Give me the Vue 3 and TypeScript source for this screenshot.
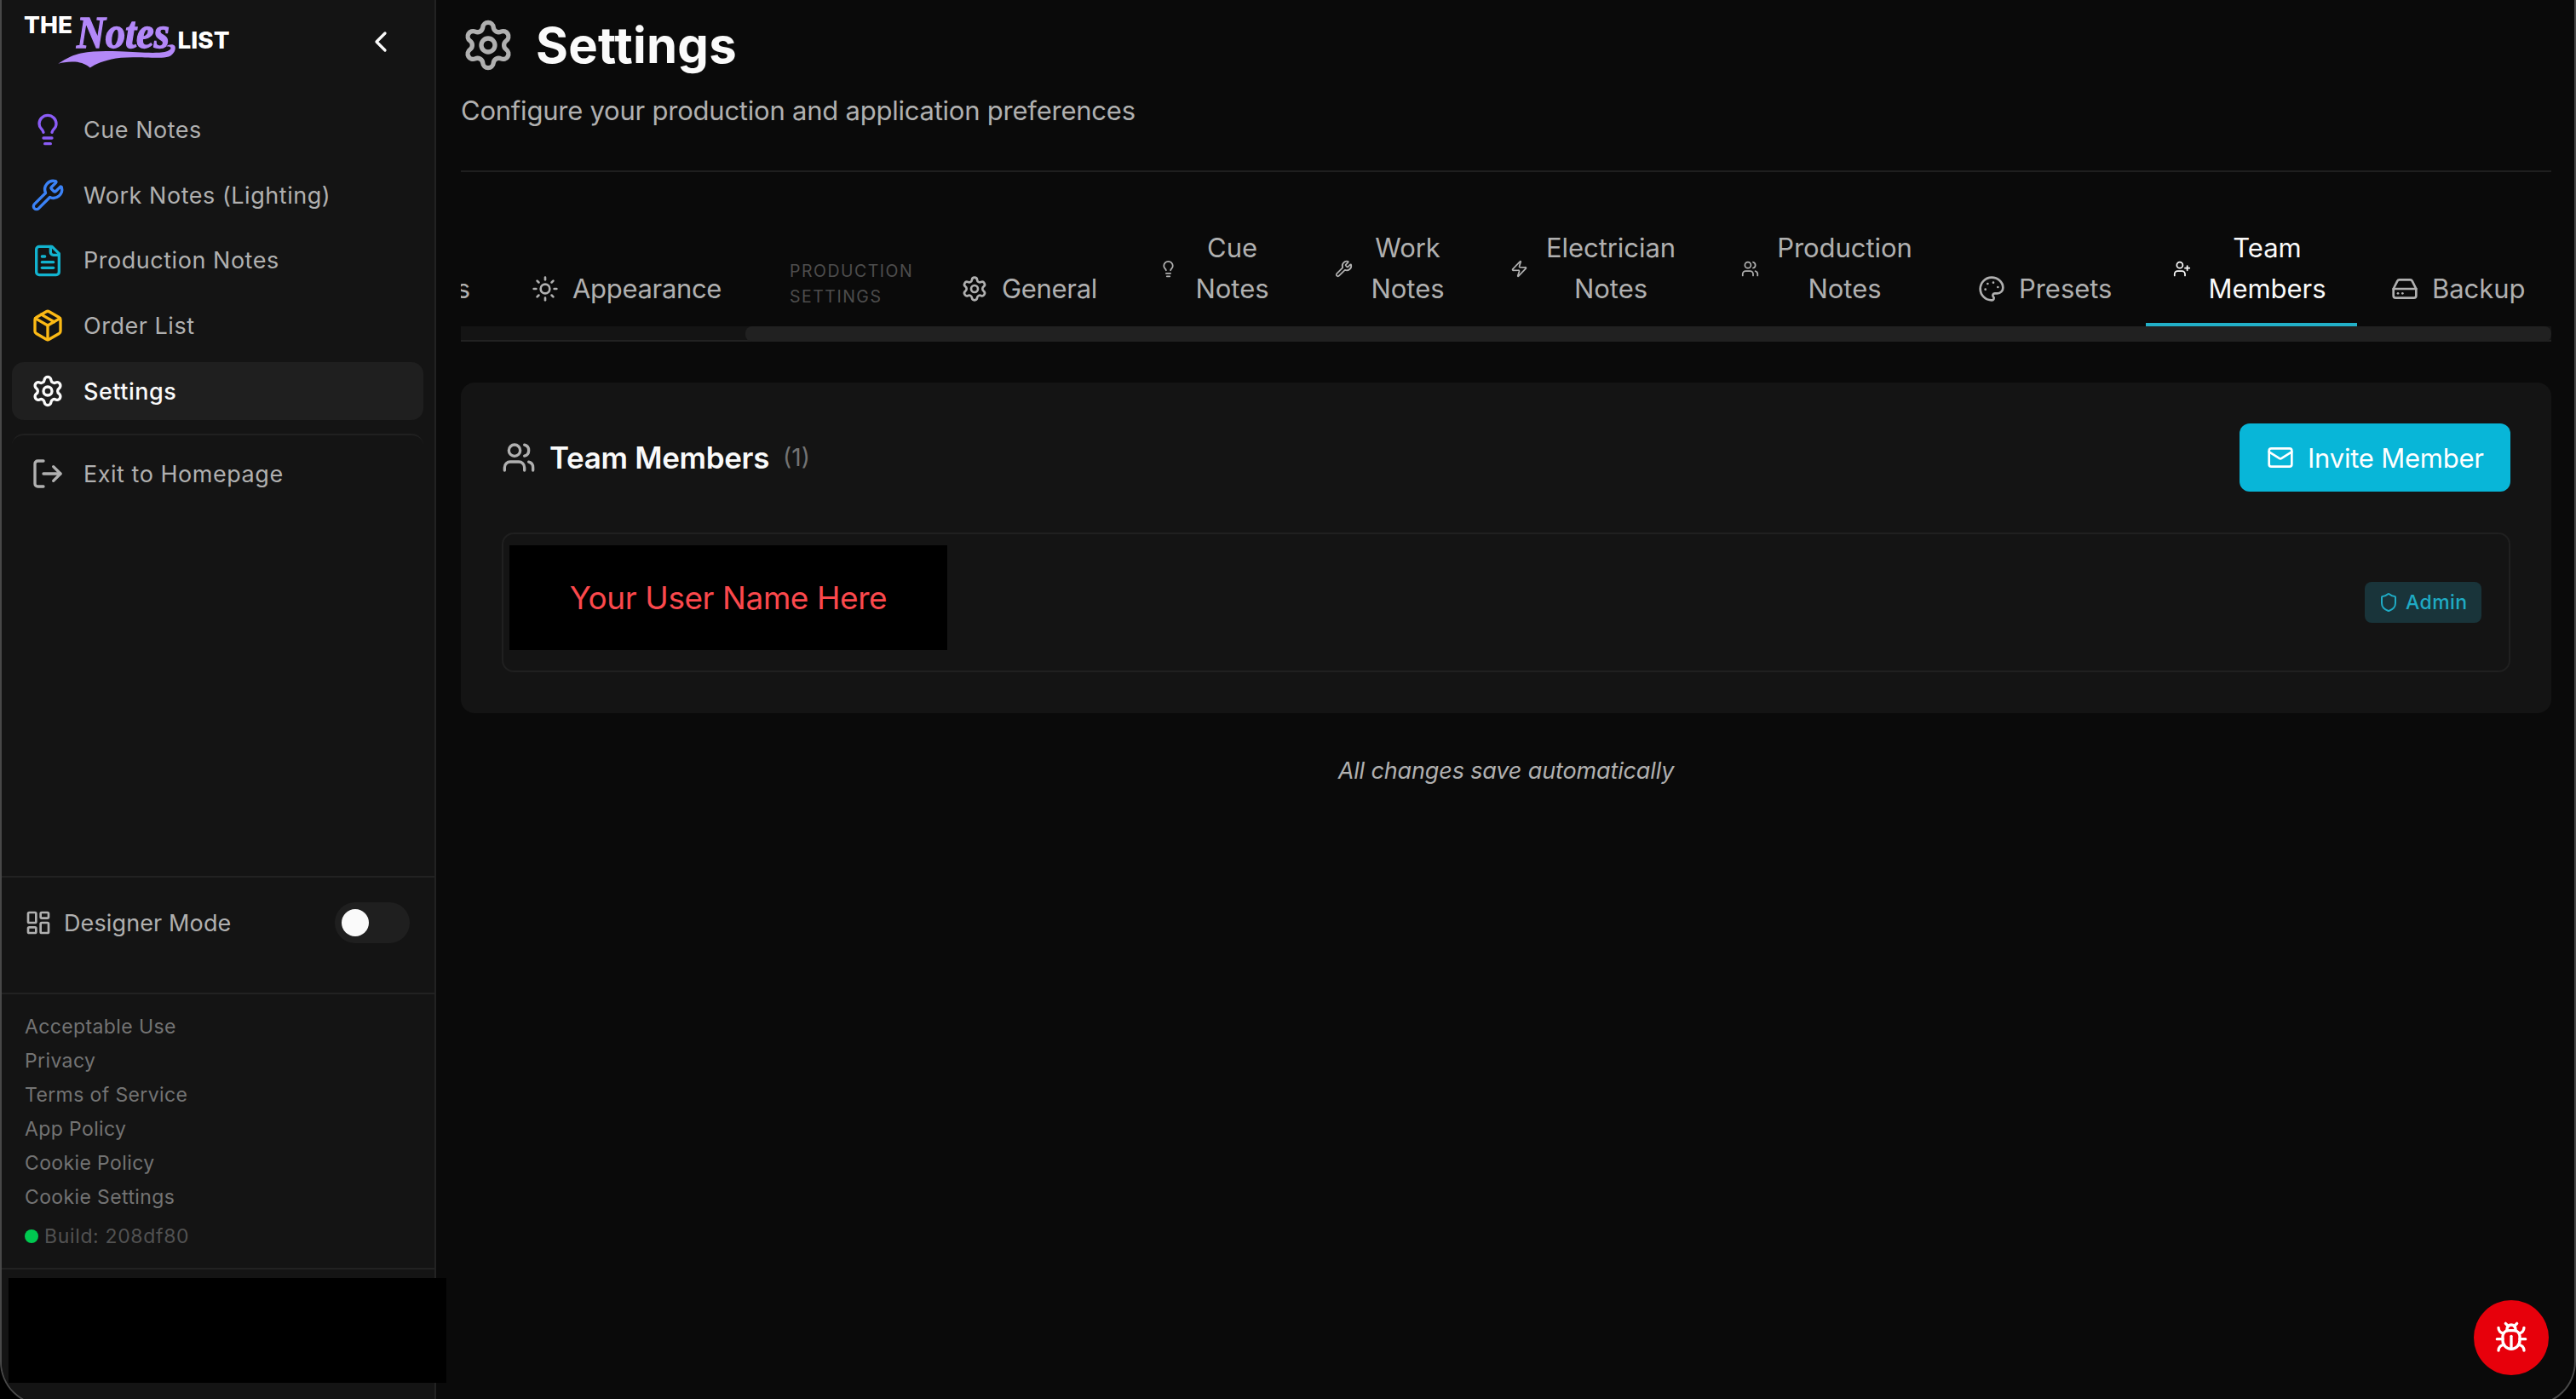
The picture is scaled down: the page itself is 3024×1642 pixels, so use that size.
<script setup lang="ts">
import { defineComponent, h } from 'vue'

interface Glyph { d?: string[]; c?: number[][]; r?: number[][] }
interface NavItem { label: string; icon: string; color: string; active?: boolean }
interface Tab { lines: string[]; icon: string; width: number; tight?: boolean; active?: boolean }

const glyphs: Record<string, Glyph> = {
  gear: {
    d: ['M9.671 4.136a2.34 2.34 0 0 1 4.659 0 2.34 2.34 0 0 0 3.319 1.915 2.34 2.34 0 0 1 2.33 4.033 2.34 2.34 0 0 0 0 3.831 2.34 2.34 0 0 1-2.33 4.033 2.34 2.34 0 0 0-3.319 1.915 2.34 2.34 0 0 1-4.659 0 2.34 2.34 0 0 0-3.32-1.915 2.34 2.34 0 0 1-2.33-4.033 2.34 2.34 0 0 0 0-3.831A2.34 2.34 0 0 1 6.35 6.051a2.34 2.34 0 0 0 3.319-1.915'],
    c: [[12, 12, 3]],
  },
  bulb: { d: ['M15 14c.2-1 .7-1.7 1.5-2.5 1-.9 1.5-2.2 1.5-3.5A6 6 0 0 0 6 8c0 1 .2 2.2 1.5 3.5.7.7 1.3 1.5 1.5 2.5', 'M9 18h6', 'M10 22h4'] },
  wrench: { d: ['M14.7 6.3a1 1 0 0 0 0 1.4l1.6 1.6a1 1 0 0 0 1.4 0l3.106-3.105c.32-.322.863-.22.983.218a6 6 0 0 1-8.259 7.057l-7.91 7.91a1 1 0 0 1-2.999-3l7.91-7.91a6 6 0 0 1 7.057-8.259c.438.12.54.662.219.984z'] },
  file: { d: ['M15 2H6a2 2 0 0 0-2 2v16a2 2 0 0 0 2 2h12a2 2 0 0 0 2-2V7Z', 'M14 2v4a2 2 0 0 0 2 2h4', 'M10 9H8', 'M16 13H8', 'M16 17H8'] },
  box: { d: ['M11 21.73a2 2 0 0 0 2 0l7-4A2 2 0 0 0 21 16V8a2 2 0 0 0-1-1.73l-7-4a2 2 0 0 0-2 0l-7 4A2 2 0 0 0 3 8v8a2 2 0 0 0 1 1.73z', 'M12 22V12', 'M3.29 7 12 12l8.71-5', 'm7.5 4.27 9 5.15'] },
  exit: { d: ['M9 21H5a2 2 0 0 1-2-2V5a2 2 0 0 1 2-2h4', 'm16 17 5-5-5-5', 'M21 12H9'] },
  chevron: { d: ['m15 18-6-6 6-6'] },
  dashboard: { r: [[3, 3, 7, 9, 1], [14, 3, 7, 5, 1], [14, 12, 7, 9, 1], [3, 16, 7, 5, 1]] },
  sun: { d: ['M12 2v2', 'M12 20v2', 'm4.93 4.93 1.41 1.41', 'm17.66 17.66 1.41 1.41', 'M2 12h2', 'M20 12h2', 'm6.34 17.66-1.41 1.41', 'm19.07 4.93-1.41 1.41'], c: [[12, 12, 4]] },
  zap: { d: ['M4 14a1 1 0 0 1-.78-1.63l9.9-10.2a.5.5 0 0 1 .86.46l-1.92 6.02A1 1 0 0 0 13 10h7a1 1 0 0 1 .78 1.63l-9.9 10.2a.5.5 0 0 1-.86-.46l1.92-6.02A1 1 0 0 0 11 14z'] },
  users: { d: ['M16 21v-2a4 4 0 0 0-4-4H6a4 4 0 0 0-4 4v2', 'M22 21v-2a4 4 0 0 0-3-3.87', 'M16 3.13a4 4 0 0 1 0 7.75'], c: [[9, 7, 4]] },
  userplus: { d: ['M16 21v-2a4 4 0 0 0-4-4H6a4 4 0 0 0-4 4v2', 'M19 8v6', 'M22 11h-6'], c: [[9, 7, 4]] },
  palette: { d: ['M12 22a1 1 0 0 1 0-20 10 9 0 0 1 10 9 5 5 0 0 1-5 5h-2.25a1.75 1.75 0 0 0-1.4 2.8l.3.4a1.75 1.75 0 0 1-1.4 2.8z', 'M13.5 6.5h.01', 'M17.5 10.5h.01', 'M6.5 12.5h.01', 'M8.5 7.5h.01'] },
  drive: { d: ['M22 12H2', 'M5.45 5.11 2 12v6a2 2 0 0 0 2 2h16a2 2 0 0 0 2-2v-6l-3.45-6.89A2 2 0 0 0 16.76 4H7.24a2 2 0 0 0-1.79 1.11z', 'M6 16h.01', 'M10 16h.01'] },
  mail: { d: ['m22 7-8.97 5.7a1.94 1.94 0 0 1-2.06 0L2 7'], r: [[2, 4, 20, 16, 2]] },
  shield: { d: ['M20 13c0 5-3.5 7.5-7.66 8.95a1 1 0 0 1-.67-.01C7.5 20.5 4 18 4 13V6a1 1 0 0 1 1-1c2 0 4.5-1.2 6.24-2.72a1.17 1.17 0 0 1 1.52 0C14.51 3.81 17 5 19 5a1 1 0 0 1 1 1z'] },
  bug: { d: ['m8 2 1.88 1.88', 'M14.12 3.88 16 2', 'M9 7.13v-1a3.003 3.003 0 1 1 6 0v1', 'M12 20c-3.3 0-6-2.7-6-6v-3a4 4 0 0 1 4-4h4a4 4 0 0 1 4 4v3c0 3.3-2.7 6-6 6', 'M12 20v-9', 'M6.53 9C4.6 8.8 3 7.1 3 5', 'M6 13H2', 'M3 21c0-2.1 1.7-3.9 3.8-4', 'M20.97 5c0 2.1-1.6 3.8-3.5 4', 'M22 13h-4', 'M17.2 17c2.1.1 3.8 1.9 3.8 4'] },
}

const Icon = defineComponent({
  props: { name: { type: String, required: true }, size: { type: Number, default: 40 } },
  setup(props) {
    return () => {
      const g = glyphs[props.name]
      return h('svg', {
        viewBox: '0 0 24 24', width: props.size, height: props.size, fill: 'none', stroke: 'currentColor',
        'stroke-width': 2, 'stroke-linecap': 'round', 'stroke-linejoin': 'round',
      }, [
        ...(g.d ?? []).map((d) => h('path', { d })),
        ...(g.c ?? []).map(([cx, cy, r]) => h('circle', { cx, cy, r })),
        ...(g.r ?? []).map(([x, y, width, height, rx]) => h('rect', { x, y, width, height, rx })),
      ])
    }
  },
})

const nav: NavItem[] = [
  { label: 'Cue Notes', icon: 'bulb', color: '#8b5cf6' },
  { label: 'Work Notes (Lighting)', icon: 'wrench', color: '#3b82f6' },
  { label: 'Production Notes', icon: 'file', color: '#12b3cf' },
  { label: 'Order List', icon: 'box', color: '#fbb915' },
  { label: 'Settings', icon: 'gear', color: '#fafafa', active: true },
]

const links: string[] = ['Acceptable Use', 'Privacy', 'Terms of Service', 'App Policy', 'Cookie Policy', 'Cookie Settings']

const tabs: Tab[] = [
  { lines: ['General'], icon: 'gear', width: 225, tight: true },
  { lines: ['Cue', 'Notes'], icon: 'bulb', width: 198 },
  { lines: ['Work', 'Notes'], icon: 'wrench', width: 198 },
  { lines: ['Electrician', 'Notes'], icon: 'zap', width: 263 },
  { lines: ['Production', 'Notes'], icon: 'users', width: 270 },
  { lines: ['Presets'], icon: 'palette', width: 221 },
  { lines: ['Team', 'Members'], icon: 'userplus', width: 248, active: true },
  { lines: ['Backup'], icon: 'drive', width: 220 },
]
</script>

<template>
  <div class="viewport">
    <div class="window">
      <aside class="sidebar">
        <header class="brand">
          <svg class="logo" viewBox="0 0 260 80" width="260" height="80">
            <text class="word" x="8" y="28.7" font-size="26.6" textLength="57" lengthAdjust="spacingAndGlyphs">THE</text>
            <text class="script" x="70" y="45.5" font-size="53" textLength="109" lengthAdjust="spacingAndGlyphs">Notes</text>
            <text class="word" x="188.5" y="47" font-size="26.6" textLength="61" lengthAdjust="spacingAndGlyphs">LIST</text>
            <path class="swash" d="M48.3 64.8C58 58 67 54 75 52.4C90 49.5 105 49.6 120 50.3C138 51.2 152 52.3 167 51.8C173 51.4 178 50 180 47.8C181.4 45.6 179.5 44 175 44.6C178 42 183.5 41.4 185.4 44.2C186.8 48 184.5 53.5 178 56.6C172 58.6 160 57.6 150 57.4C138 57.3 125 57.4 116 58.6C102 61 92 65.5 85.7 69.5C82 66.3 76 63.2 68 62.6C60 62.2 54 63.2 48.3 64.8Z" />
          </svg>
          <Icon class="collapse" name="chevron" :size="40" />
        </header>

        <nav class="nav">
          <a v-for="item in nav" :key="item.label" class="nav-item" :class="{ active: item.active }">
            <Icon :name="item.icon" :style="{ color: item.color }" />
            <span>{{ item.label }}</span>
          </a>
          <a class="nav-item leave">
            <Icon name="exit" />
            <span>Exit to Homepage</span>
          </a>
        </nav>

        <section class="mode">
          <div class="mode-row">
            <Icon name="dashboard" :size="32" />
            <span class="mode-label">Designer Mode</span>
            <span class="toggle"><i class="knob"></i></span>
          </div>
        </section>

        <section class="legal">
          <a v-for="link in links" :key="link">{{ link }}</a>
          <div class="build"><i class="dot"></i><span>Build: 208df80</span></div>
        </section>

        <section class="account"><div class="redacted"></div></section>
      </aside>

      <main class="main">
        <header class="page-head">
          <div class="title-row">
            <Icon name="gear" :size="64" />
            <h1>Settings</h1>
          </div>
          <p>Configure your production and application preferences</p>
        </header>

        <div class="tabs">
          <div class="tab-row">
            <div class="tab clipped">s</div>
            <div class="tab tight appearance"><Icon name="sun" :size="32" /><span>Appearance</span></div>
            <div class="group-label">PRODUCTION<br />SETTINGS</div>
            <div
              v-for="tab in tabs"
              :key="tab.icon"
              class="tab"
              :class="{ active: tab.active, tight: tab.tight, double: tab.lines.length > 1 }"
              :style="{ width: tab.width + 'px' }"
            >
              <Icon :name="tab.icon" :size="tab.lines.length > 1 ? 21 : 32" />
              <span class="tab-text"><span v-for="line in tab.lines" :key="line" class="line">{{ line }}</span></span>
            </div>
          </div>
          <div class="scrollbar"><div class="thumb"></div></div>
        </div>

        <section class="card">
          <div class="card-head">
            <Icon name="users" />
            <h2>Team Members</h2>
            <span class="count">(1)</span>
            <button class="invite"><Icon name="mail" :size="32" /><span>Invite Member</span></button>
          </div>
          <div class="member">
            <div class="user-name">Your User Name Here</div>
            <span class="badge"><Icon name="shield" :size="24" /><span>Admin</span></span>
          </div>
        </section>

        <p class="autosave">All changes save automatically</p>
      </main>

      <button class="fab"><Icon name="bug" /></button>
    </div>
  </div>
</template>

<style>
html, body { margin: 0; background: #000; }
</style>

<style scoped>
.viewport { width: 3024px; height: 1642px; overflow: hidden; background: #000; font-family: Inter, "Liberation Sans", sans-serif; color: #b0b0b0; }
.window { position: relative; display: flex; box-sizing: border-box; width: 3024px; height: 1650px; border: 2px solid #484848; border-top: 0; border-radius: 0 0 52px 52px; background: #0a0a0a; }
svg { flex: none; display: block; }
button { border: 0; padding: 0; font: inherit; }

.sidebar { display: flex; flex-direction: column; box-sizing: border-box; width: 510px; background: #141414; border-right: 2px solid #222; border-bottom-left-radius: 50px; }
.brand { display: flex; align-items: flex-start; justify-content: space-between; height: 118px; box-sizing: border-box; padding: 10px 43px 0 18px; }
.word { font-family: Inter, sans-serif; font-weight: 800; fill: #fff; }
.script { font-family: "Liberation Serif", serif; font-weight: 700; font-style: italic; fill: #b388f8; stroke: #b388f8; stroke-width: 1.4; }
.swash { fill: #b388f8; }
.collapse { margin-top: 19px; color: #fafafa; }
.nav { display: flex; flex-direction: column; gap: 8px; padding: 0 13px 0 12px; flex: 1; }
.nav-item { display: flex; align-items: center; gap: 22px; height: 68.7px; box-sizing: border-box; padding-left: 22px; border-radius: 14px; font-size: 27px; letter-spacing: 0.53px; white-space: nowrap; }
.nav-item.active { background: #1f1f1f; color: #fafafa; font-weight: 500; letter-spacing: 0.5px; }
.leave { height: 92px; margin-top: 8px; border-top: 2px solid #202020; }

.mode { height: 137px; box-sizing: border-box; border-top: 2px solid #222; padding: 29px 29px 0 27px; }
.mode-row { display: flex; align-items: center; height: 48px; }
.mode-label { flex: 1; margin-left: 14px; font-size: 27px; letter-spacing: 0.12px; }
.toggle { display: flex; align-items: center; width: 88px; height: 48px; box-sizing: border-box; padding-left: 8px; border-radius: 24px; background: #1f1f1f; }
.knob { width: 32px; height: 32px; border-radius: 50%; background: #fafafa; }
.legal { display: flex; flex-direction: column; height: 323px; box-sizing: border-box; border-top: 2px solid #222; padding: 18px 27px 0; font-size: 23px; line-height: 40px; letter-spacing: 0.38px; color: #737373; }
.build { display: flex; align-items: center; gap: 7px; margin-top: 6px; color: #525252; letter-spacing: 0.65px; }
.dot { width: 16px; height: 16px; border-radius: 50%; background: #00c950; }
.account { position: relative; height: 160px; box-sizing: border-box; border-top: 2px solid #222; }
.redacted { position: absolute; left: 8px; top: 10px; width: 514px; height: 123px; background: #000; z-index: 2; }

.main { flex: 1; min-width: 0; padding: 0 27px 0 29px; }
.page-head { height: 202px; box-sizing: border-box; padding-top: 21px; border-bottom: 2px solid #1f1f1f; }
.title-row { display: flex; align-items: center; gap: 24px; height: 64px; }
h1 { margin: 0; font-size: 58px; line-height: 64px; font-weight: 700; letter-spacing: 0.25px; color: #fafafa; }
.page-head p { margin: 21px 0 0; font-size: 31px; line-height: 48px; letter-spacing: -0.23px; }

.tabs { margin-top: 49px; }
.tab-row { display: flex; justify-content: flex-end; align-items: flex-end; gap: 8px; height: 132px; overflow: hidden; }
.tab { flex: none; display: flex; align-items: center; gap: 16px; box-sizing: border-box; padding: 16px 32px; border-bottom: 4px solid transparent; font-size: 31px; line-height: 48px; letter-spacing: -0.05px; }
.tab.tight { letter-spacing: -0.32px; }
.tab.active { color: #fafafa; border-bottom-color: #22b0c8; }
.tab.clipped { width: 43px; padding-left: 0; justify-content: flex-end; }
.appearance { width: 288px; }
.double .tab-text { flex: 1; text-align: center; }
.line { display: block; }
.group-label { flex: none; width: 200px; box-sizing: border-box; padding: 0 0 20px 39px; font-size: 19.5px; line-height: 30px; letter-spacing: 1.5px; color: #4d4d4d; }
.scrollbar { display: flex; justify-content: flex-end; height: 18px; box-sizing: border-box; background: #141414; border-bottom: 2px solid #222; }
.thumb { width: 2120px; height: 18px; border-radius: 8px; background: #212121; }

.card { margin-top: 48px; height: 388px; box-sizing: border-box; padding: 48px; border-radius: 16px; background: #141414; }
.card-head { display: flex; align-items: center; height: 80px; }
h2 { margin: 0 0 0 16px; font-size: 35px; font-weight: 600; letter-spacing: -0.33px; color: #fafafa; }
.count { margin-left: 16px; font-size: 28px; color: #737373; }
.invite { display: flex; align-items: center; gap: 16px; width: 318px; height: 80px; box-sizing: border-box; margin-left: auto; padding-left: 32px; border-radius: 12px; background: #08b6d8; color: #fff; font-size: 31px; letter-spacing: -0.23px; white-space: nowrap; }
.member { position: relative; display: flex; align-items: center; justify-content: flex-end; height: 164px; box-sizing: border-box; margin-top: 48px; padding-right: 32px; border: 2px solid #202020; border-radius: 14px; }
.user-name { position: absolute; left: 7px; top: 13px; width: 514px; height: 123px; background: #000; color: #fb484c; font-size: 37px; line-height: 123px; letter-spacing: -0.43px; text-align: center; }
.badge { display: flex; align-items: center; gap: 8px; width: 137px; height: 48px; box-sizing: border-box; padding-left: 16px; border-radius: 8px; background: #19343a; color: #1fabc4; font-size: 23px; font-weight: 500; letter-spacing: 0.45px; }
.autosave { margin: 48px 0 0; font-size: 27px; line-height: 40px; letter-spacing: -0.14px; font-style: italic; text-align: center; }

.fab { position: absolute; left: 2902px; top: 1526px; display: flex; align-items: center; justify-content: center; width: 88px; height: 88px; border-radius: 50%; background: #e7000b; color: #fff; }
</style>
